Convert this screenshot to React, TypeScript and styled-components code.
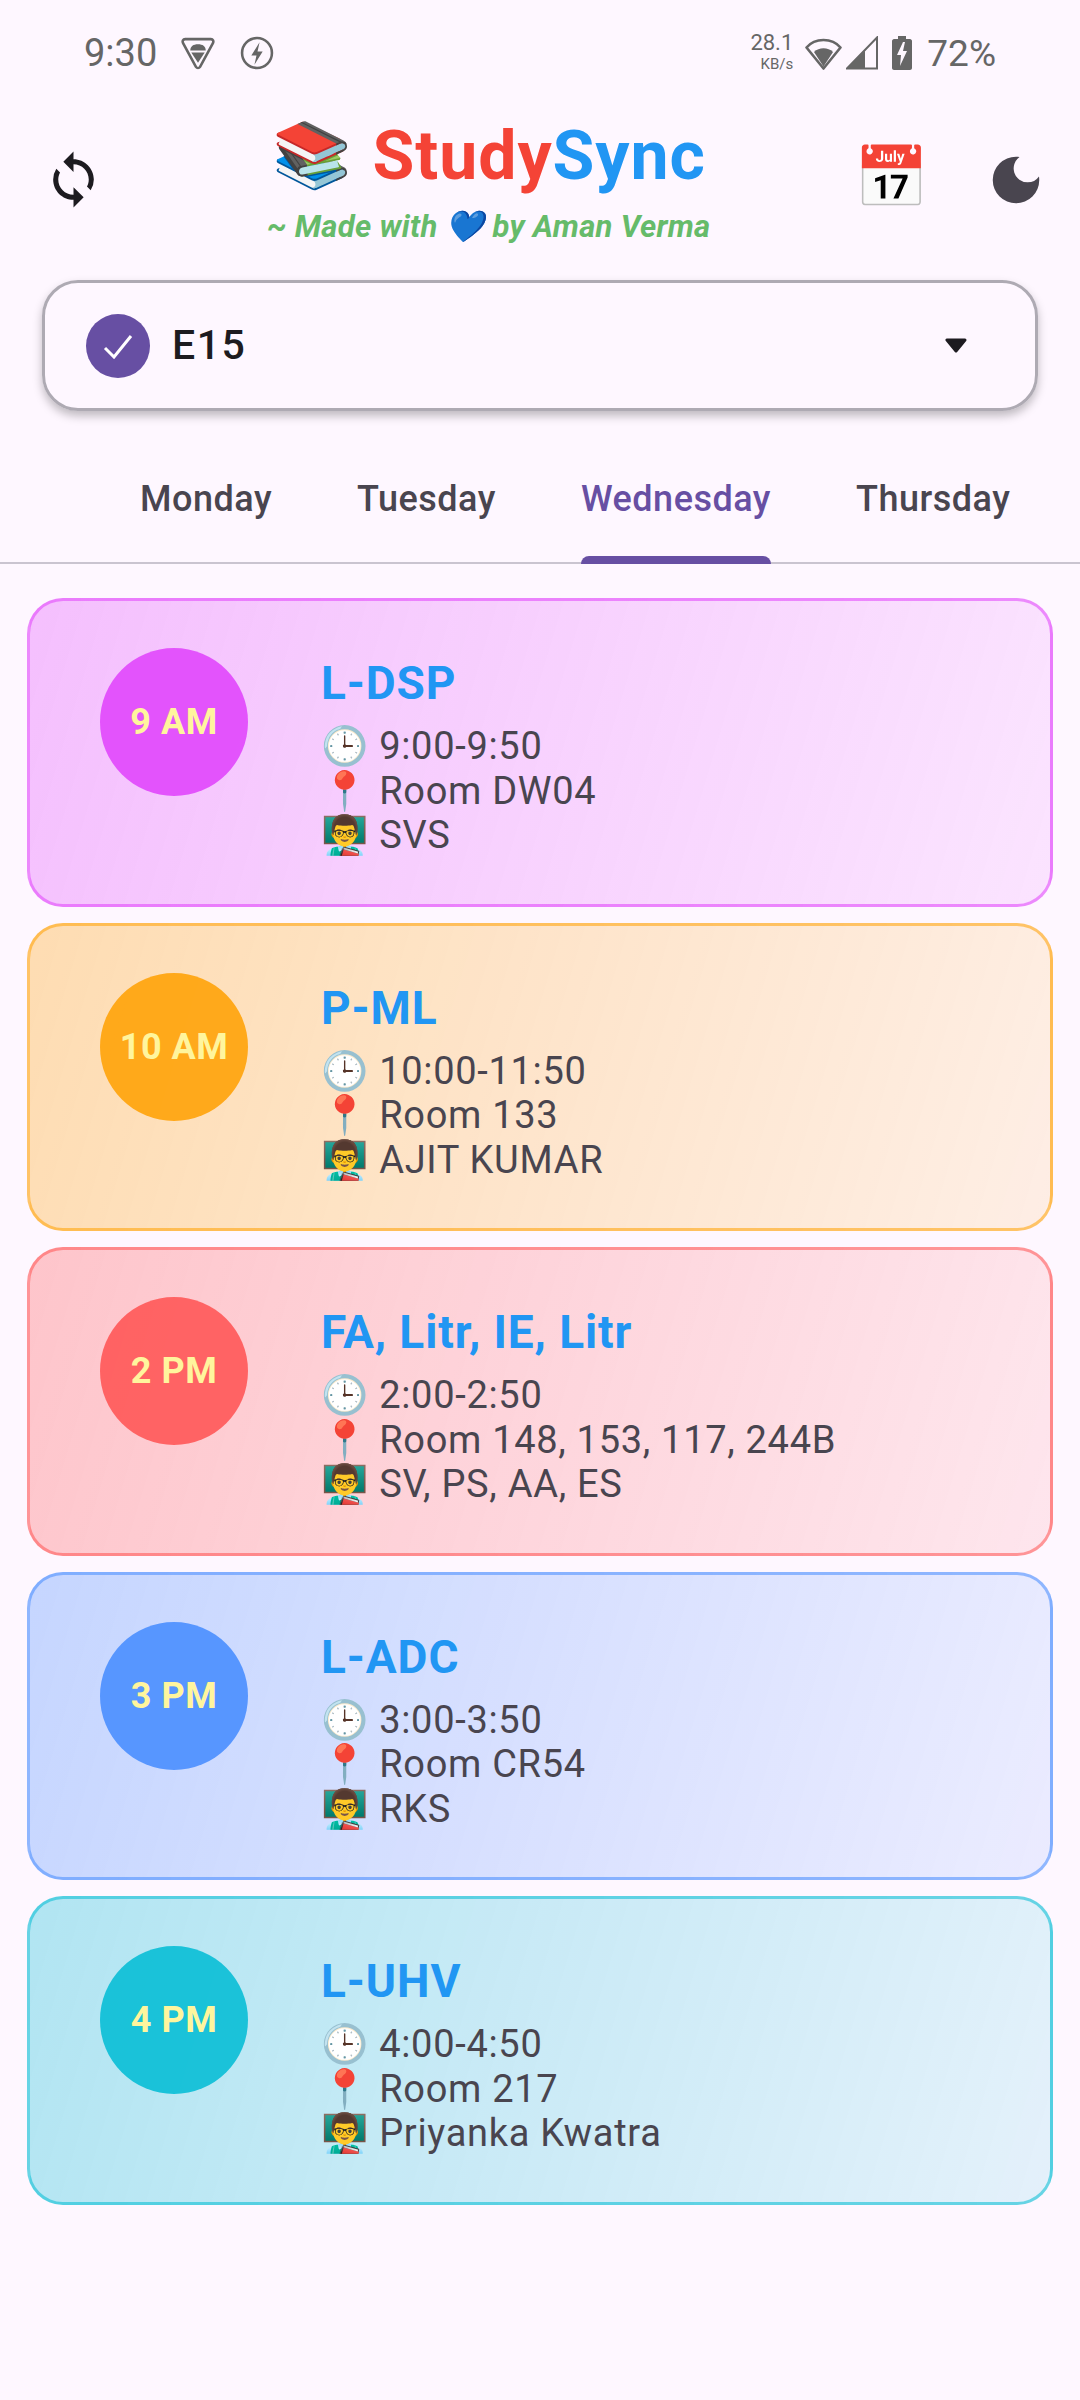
import React from 'react';
import styled, { createGlobalStyle } from 'styled-components';
import { MdSync, MdDarkMode } from 'react-icons/md';

const GlobalStyle = createGlobalStyle`
  html, body {
    margin: 0;
    padding: 0;
    background: #fef7ff;
  }
  * {
    box-sizing: border-box;
  }
`;

const classes = [
  { hour: '9 AM', title: 'L-DSP', time: '9:00-9:50', room: 'Room DW04', teacher: 'SVS', rgb: '224, 64, 251' },
  { hour: '10 AM', title: 'P-ML', time: '10:00-11:50', room: 'Room 133', teacher: 'AJIT KUMAR', rgb: '255, 160, 0' },
  { hour: '2 PM', title: 'FA, Litr, IE, Litr', time: '2:00-2:50', room: 'Room 148, 153, 117, 244B', teacher: 'SV, PS, AA, ES', rgb: '255, 82, 82' },
  { hour: '3 PM', title: 'L-ADC', time: '3:00-3:50', room: 'Room CR54', teacher: 'RKS', rgb: '68, 138, 255' },
  { hour: '4 PM', title: 'L-UHV', time: '4:00-4:50', room: 'Room 217', teacher: 'Priyanka Kwatra', rgb: '0, 188, 212' },
];

function App() {
  return (
    <Page>
      <GlobalStyle />
      <StatusBar>
        <StatusGroup>
          <Clock>9:30</Clock>
          <StatusIcon viewBox="0 0 33 33" $w={34} $gap={24}>
            <path d="M4 3h25c2 0 3 2 2 4L18.500 30c-1 1.500-3 1.500-4 0L2 7C1 5 2 3 4 3z" fill="none" stroke="#666" strokeWidth="2.500" />
            <path d="M9 14c0-4 3-6 7.500-6S24 10 24 14z" fill="#666" />
            <path d="M10 16h13l-6.500 10z" fill="#666" />
          </StatusIcon>
          <StatusIcon viewBox="0 0 33 33" $w={34} $gap={25}>
            <circle cx="16.500" cy="16.500" r="14.500" fill="none" stroke="#666" strokeWidth="2.500" />
            <path d="M19 6l-8 13h5l-2 9 8-13h-5z" fill="#666" />
          </StatusIcon>
        </StatusGroup>
        <StatusGroup>
          <NetSpeed>
            <span>28.1</span>
            <small>KB/s</small>
          </NetSpeed>
          <StatusIcon viewBox="0 0 37 33" $w={37} $gap={12}>
            <path d="M1.500 11C10 1 27 1 35.500 11L18.500 32z" fill="none" stroke="#666" strokeWidth="2.600" strokeLinejoin="round" />
            <path d="M9 15.500c5-5 14-5 19 0L18.500 30z" fill="#666" />
          </StatusIcon>
          <StatusIcon viewBox="0 0 32 33" $w={32} $gap={4}>
            <path d="M31 1v31H1z" fill="none" stroke="#666" strokeWidth="2" />
            <path d="M19 14v18H1z" fill="#666" />
          </StatusIcon>
          <StatusIcon viewBox="0 0 20 34" $w={20} $gap={14}>
            <path d="M6 0h8v3h4c1 0 2 1 2 2v27c0 1-1 2-2 2H2c-1 0-2-1-2-2V5c0-1 1-2 2-2h4z" fill="#666" />
            <path d="M11 6L5 19h4l-1 11 7-15h-4l2-9z" fill="#fef7ff" />
          </StatusIcon>
          <Percent>72%</Percent>
        </StatusGroup>
      </StatusBar>

      <Header>
        <SyncButton>
          <MdSync size={61} color="#1d1b20" />
        </SyncButton>
        <Brand>
          <BrandTitle>
            <BooksEmoji>📚</BooksEmoji>
            <RedWord>Study</RedWord>
            <BlueWord>Sync</BlueWord>
          </BrandTitle>
          <Tagline>~ Made with 💙 by Aman Verma</Tagline>
        </Brand>
        <CalendarEmoji>📅</CalendarEmoji>
        <ThemeButton>
          <MdDarkMode size={62} color="#49454f" />
        </ThemeButton>
      </Header>

      <Dropdown>
        <CheckCircle>
          <svg width="30" height="26" viewBox="0 0 30 26">
            <path d="M2 15l9 9L28 3" fill="none" stroke="#fff" strokeWidth="3" />
          </svg>
        </CheckCircle>
        <BatchName>E15</BatchName>
        <Caret viewBox="0 0 22 15" width="22" height="15">
          <path d="M2 2h18l-9 11z" fill="#1d1b20" stroke="#1d1b20" strokeWidth="3" strokeLinejoin="round" />
        </Caret>
      </Dropdown>

      <Tabs>
        <Tab>Monday</Tab>
        <Tab>Tuesday</Tab>
        <Tab $active>Wednesday</Tab>
        <Tab>Thursday</Tab>
      </Tabs>

      <CardList>
        {classes.map((c) => (
          <Card key={c.title} $rgb={c.rgb}>
            <HourCircle $rgb={c.rgb}>{c.hour}</HourCircle>
            <Details>
              <Subject>{c.title}</Subject>
              <InfoLine>🕒 {c.time}</InfoLine>
              <InfoLine>📍 {c.room}</InfoLine>
              <InfoLine>👨‍🏫 {c.teacher}</InfoLine>
            </Details>
          </Card>
        ))}
      </CardList>
    </Page>
  );
}

export default App;

const Page = styled.div`
  min-height: 2400px;
  background: #fef7ff;
  font-family: Roboto, "Noto Color Emoji", sans-serif;
  overflow: hidden;
`;

const StatusBar = styled.div`
  height: 106px;
  padding: 0 84px;
  display: flex;
  align-items: center;
  justify-content: space-between;
  color: #666;
`;

const StatusGroup = styled.div`
  display: flex;
  align-items: center;
`;

const Clock = styled.span`
  font-size: 38px;
`;

const StatusIcon = styled.svg<{ $w: number; $gap: number }>`
  width: ${(p) => p.$w}px;
  height: 34px;
  margin-left: ${(p) => p.$gap}px;
`;

const NetSpeed = styled.div`
  display: flex;
  flex-direction: column;
  align-items: flex-end;
  line-height: 20px;
  span {
    font-size: 22px;
  }
  small {
    font-size: 15px;
    margin-top: 1px;
  }
`;

const Percent = styled.span`
  font-size: 37px;
  margin-left: 15px;
`;

const Header = styled.div`
  height: 174px;
  display: flex;
  align-items: flex-start;
  padding-top: 14px;
  padding-left: 43px;
`;

const SyncButton = styled.div`
  width: 61px;
  height: 61px;
  margin-top: 29px;
  display: flex;
`;

const Brand = styled.div`
  width: 490px;
  margin-left: 163px;
  margin-top: -3px;
  display: flex;
  flex-direction: column;
`;

const BrandTitle = styled.div`
  display: flex;
  align-items: center;
  font-size: 68px;
  font-weight: 700;
  line-height: 78px;
  letter-spacing: 0.9px;
`;

const BooksEmoji = styled.span`
  font-size: 64px;
  margin-right: 20px;
  margin-left: 5px;
`;

const RedWord = styled.span`
  color: #f44336;
`;

const BlueWord = styled.span`
  color: #2196f3;
`;

const Tagline = styled.div`
  font-size: 31px;
  font-weight: 700;
  font-style: italic;
  color: #66bb6a;
  line-height: 40px;
  letter-spacing: 0.3px;
  margin-top: 12px;
`;

const CalendarEmoji = styled.span`
  font-size: 60px;
  line-height: 70px;
  margin-top: 23px;
  margin-left: 97px;
`;

const ThemeButton = styled.div`
  width: 62px;
  height: 62px;
  margin-top: 29px;
  margin-left: 56px;
  display: flex;
`;

const Dropdown = styled.div`
  margin: 0 42px;
  height: 131px;
  border: 3px solid #aeaab3;
  border-radius: 36px;
  box-shadow: 0 5px 10px rgba(0, 0, 0, 0.25);
  display: flex;
  align-items: center;
  padding: 0 68px 0 41px;
`;

const CheckCircle = styled.div`
  width: 64px;
  height: 64px;
  border-radius: 50%;
  background: #674fa3;
  display: flex;
  align-items: center;
  justify-content: center;
`;

const BatchName = styled.span`
  margin-left: 22px;
  margin-top: -2px;
  flex: 1;
  font-size: 41px;
  font-weight: 500;
  letter-spacing: 1.500px;
  color: #1d1b20;
`;

const Caret = styled.svg`
  display: block;
`;

const Tabs = styled.div`
  margin-top: 50px;
  height: 103px;
  padding-left: 140px;
  border-bottom: 2px solid #cac4d0;
  display: flex;
  gap: 85px;
`;

const Tab = styled.div<{ $active?: boolean }>`
  position: relative;
  padding-top: 17px;
  white-space: nowrap;
  font-size: 36px;
  font-weight: 500;
  letter-spacing: 0.5px;
  color: ${(p) => (p.$active ? '#674fa3' : '#49454f')};
  ${(p) =>
    p.$active &&
    `
    &::after {
      content: '';
      position: absolute;
      left: 0;
      right: 0;
      bottom: -2px;
      height: 8px;
      background: #674fa3;
      border-radius: 8px 8px 0 0;
    }
  `}
`;

const CardList = styled.div`
  margin-top: 34px;
  padding: 0 27px;
  display: flex;
  flex-direction: column;
  gap: 16px;
`;

const Card = styled.div<{ $rgb: string }>`
  height: 308.500px;
  border: 3px solid rgba(${(p) => p.$rgb}, 0.55);
  border-radius: 36px;
  background: linear-gradient(106.7deg, rgba(${(p) => p.$rgb}, 0.3), rgba(${(p) => p.$rgb}, 0.1));
  display: flex;
  align-items: flex-start;
  padding: 47px 0 0 70px;
`;

const HourCircle = styled.div<{ $rgb: string }>`
  width: 148px;
  height: 148px;
  border-radius: 50%;
  flex-shrink: 0;
  background: rgba(${(p) => p.$rgb}, 0.86);
  display: flex;
  align-items: center;
  justify-content: center;
  color: #fff59d;
  font-size: 36px;
  font-weight: 700;
  letter-spacing: 0.5px;
`;

const Details = styled.div`
  margin-left: 73px;
  padding-top: 10px;
`;

const Subject = styled.div`
  font-size: 46px;
  font-weight: 700;
  color: #2196f3;
  line-height: 50px;
  letter-spacing: 0.9px;
  margin-bottom: 16px;
`;

const InfoLine = styled.div`
  font-size: 38px;
  line-height: 44.500px;
  letter-spacing: 0.7px;
  color: #49454f;
`;
